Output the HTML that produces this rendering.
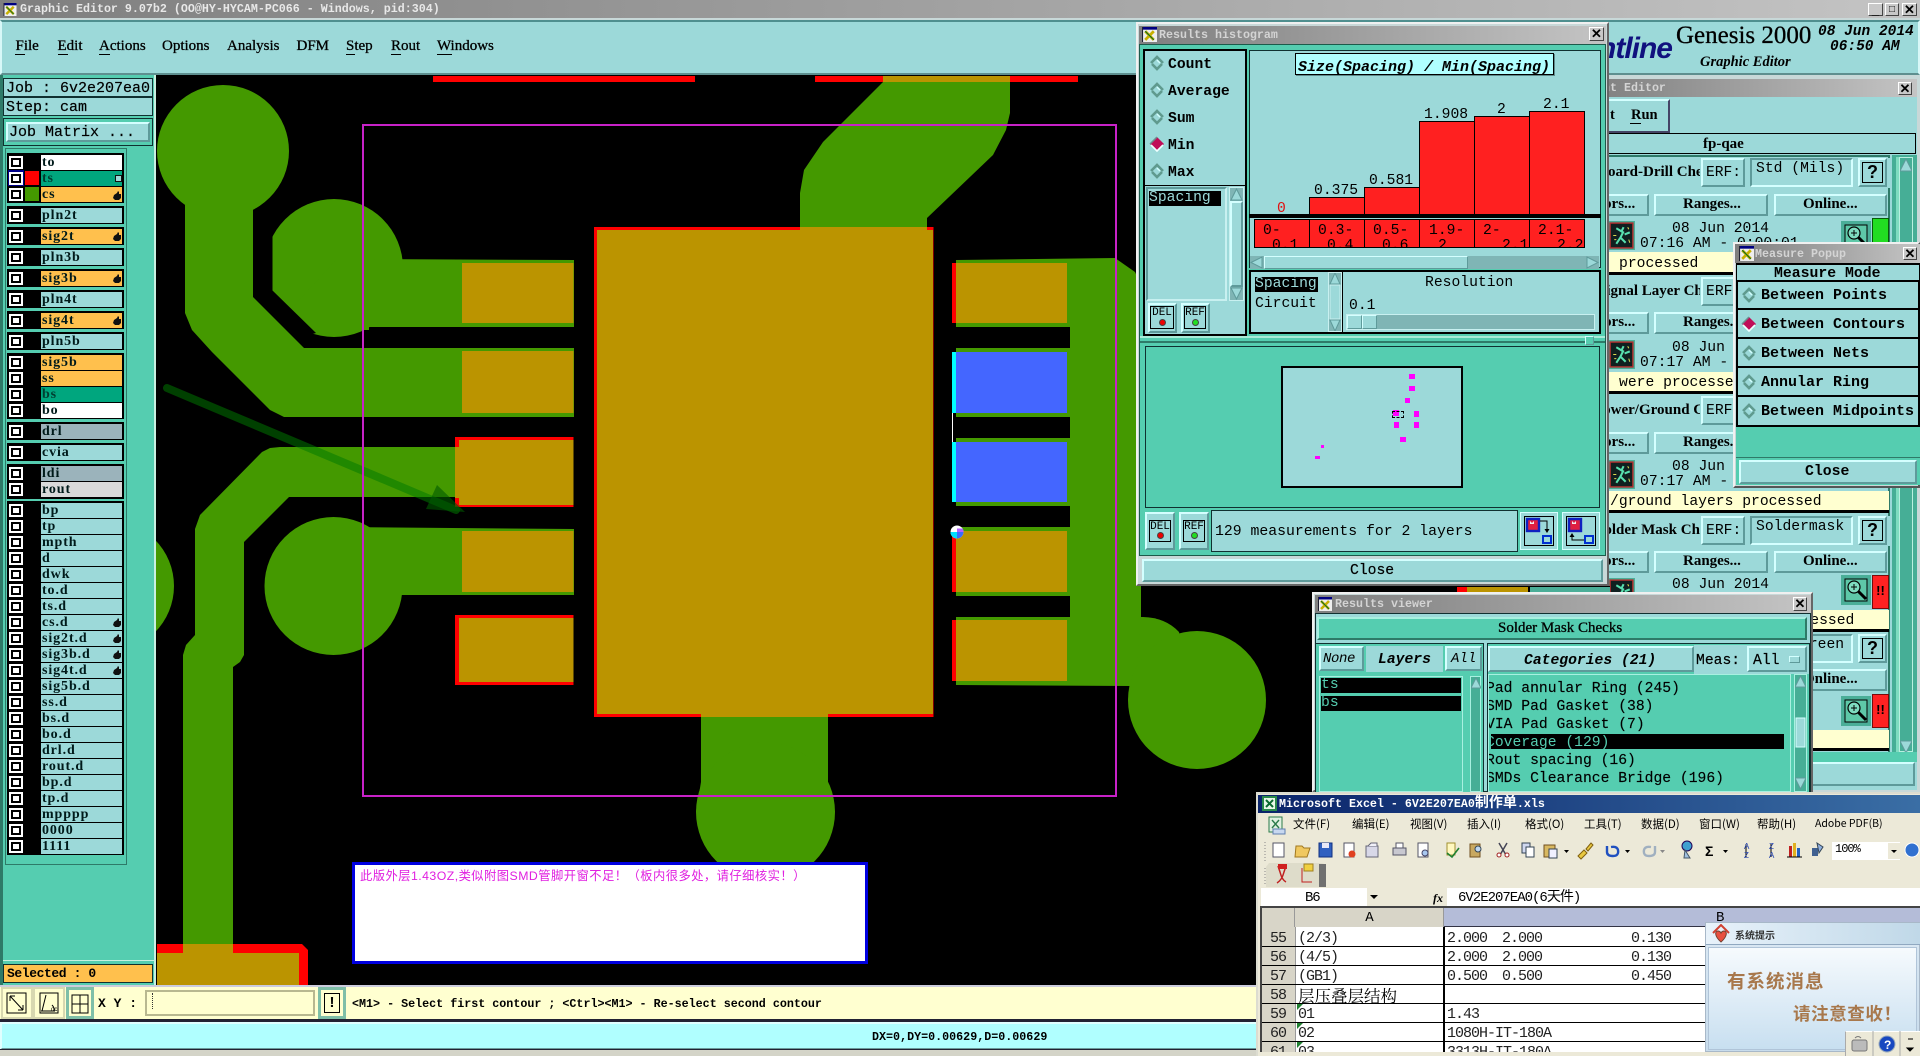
<!DOCTYPE html>
<html><head><meta charset="utf-8"><title>Graphic Editor</title>
<style>
*{box-sizing:border-box}
html,body{margin:0;padding:0;width:1920px;height:1056px;overflow:hidden;background:#000}
div,span,i,b,svg.a{position:absolute;display:block;font-style:normal;font-weight:normal}
em{font-style:normal}
.t,.t *{white-space:pre;line-height:16px;height:16px}
.m{font-family:"Liberation Mono","Noto Sans CJK SC",monospace;font-size:14.7px;color:#000}
.mb{font-family:"Liberation Mono","Noto Sans CJK SC",monospace;font-size:14.7px;font-weight:bold;color:#000}
.m.t,.mb.t{margin-top:1.5px}
.sb{font-family:"Liberation Serif","Noto Serif CJK SC",serif;font-size:15px;font-weight:bold;color:#000}
.bt{background:#9cd9d9;border:2px solid;border-color:#d4ffff #5e9a9a #5e9a9a #d4ffff}
.tl{background:linear-gradient(90deg,#7f7f7f,#c4c4c4);}
.tt{font-family:"Liberation Mono",monospace;font-size:11.67px;font-weight:bold;color:#d4d4d4;white-space:pre;line-height:16px}
.x{background:#c8c8c8;border:1px solid;border-color:#fff #444 #444 #fff;font:bold 13px/12px "Liberation Sans",sans-serif;color:#000;text-align:center}
.bx{background:#000;left:7px;width:117px}
.n{left:41px;width:81px;height:15px;background:#9cd9d9;font:bold 14px/15px "Liberation Serif",serif;letter-spacing:.9px;color:#001a1a;padding-left:1px;white-space:pre}
.c{left:13px;width:6px;height:5px;background:#fff;box-shadow:0 0 0 2px #000,0 0 0 4px #fff}
.y{background:#ffc04d}.g{background:#00a67e;color:#003d30}.w{background:#fff}.h{background:#9bb3bb}
.ms{background:#ff00ff}
</style></head><body>
<svg width="0" height="0" style="position:absolute">
<symbol id="xi" viewBox="0 0 14 14"><rect width="14" height="14" fill="#eee"/><rect width="14" height="2.5" fill="#000080"/><rect x="0" width="1" height="14" fill="#223"/><path d="M3 4l8 8M11 4l-8 8" stroke="#c8b000" stroke-width="2.6"/><path d="M3 4l8 8" stroke="#0a6a20" stroke-width="1"/></symbol>
<symbol id="d" viewBox="0 0 16 16"><polygon points="8,1 15,8 8,15 1,8" fill="#9cd9d9"/><polyline points="2,8 8,2 14,8" fill="none" stroke="#5f9a8e" stroke-width="2.6"/><polyline points="3,9 8,14 13,9" fill="none" stroke="#5f9a8e" stroke-width="2.6"/><polyline points="8,5 11,8" stroke="#d4ffff" stroke-width="1.4"/></symbol>
<symbol id="ds" viewBox="0 0 16 16"><polygon points="8,1 15,8 8,15 1,8" fill="#c00d58"/><polyline points="1,8 8,1" fill="none" stroke="#6a8f8f" stroke-width="1.5"/><polyline points="2,9 8,15 14,9" fill="none" stroke="#f0ffff" stroke-width="1.6"/></symbol>
<symbol id="hd" viewBox="0 0 8 9"><path d="M1 4L4 2L5 0L6 1L6 3L8 3L8 7L6 9L2 9L0 7Z" fill="#111"/></symbol>
<symbol id="run" viewBox="0 0 26 28"><rect width="26" height="28" fill="#4aae98"/><rect x="2" y="2" width="22" height="24" fill="#102020" stroke="#b03030" stroke-width="1.4"/><path d="M8 7l5 3 2-4M15 10l-3 6 5 5M12 16l-4 6M16 13l5-2" stroke="#58e0b0" stroke-width="2" fill="none"/><path d="M5 14h3M6 18h2M19 6l1 2M20 18l1 3" stroke="#d8d850" stroke-width="1"/></symbol>
<symbol id="zm" viewBox="0 0 30 30"><rect width="30" height="30" fill="#4aae98"/><rect x="4" y="4" width="22" height="22" fill="#5ec8a8" stroke="#000"/><circle cx="13" cy="12" r="6" fill="#7fdcc0" stroke="#000" stroke-width="1.2"/><path d="M10 12h6M13 9v6" stroke="#000"/><path d="M17 16l8 8" stroke="#000" stroke-width="3"/></symbol>
<symbol id="ib" viewBox="0 0 38 38"><rect x=".5" y=".5" width="37" height="37" fill="#9cd9d9" stroke="#d4ffff"/><rect x="4.500" y="4.500" width="29" height="29" fill="#9cd9d9" stroke="#000"/><rect x="7" y="7" width="12" height="12" fill="#e02040" stroke="#1020c0" stroke-width="2.4"/><path d="M10 9l2 2 2-2v3h-4z" fill="#f0f0f0"/><rect x="23" y="24" width="8" height="7" fill="#9cd9d9" stroke="#0030d0" stroke-width="2"/><path d="M20 9h7v11" fill="none" stroke="#000"/><path d="M24.500 17h5l-2.500 4z" fill="#000"/></symbol>
<symbol id="ib2" viewBox="0 0 38 38"><rect x=".5" y=".5" width="37" height="37" fill="#9cd9d9" stroke="#d4ffff"/><rect x="4.500" y="4.500" width="29" height="29" fill="#9cd9d9" stroke="#000"/><rect x="7" y="7" width="12" height="12" fill="#e02040" stroke="#1020c0" stroke-width="2.4"/><path d="M10 9l2 2 2-2v3h-4z" fill="#f0f0f0"/><rect x="23" y="24" width="8" height="7" fill="#9cd9d9" stroke="#0030d0" stroke-width="2"/><path d="M10 22v6h12" fill="none" stroke="#000"/><path d="M7.500 25h5l-2.500-4z" fill="#000"/></symbol>
</svg>

<!-- main window -->
<div style="left:0;top:0;width:1920px;height:1056px;background:#000"></div>
<div class="tl" style="left:0;top:0;width:1920px;height:18px"></div>
<svg class="a" style="left:3px;top:3px" width="14" height="13"><use href="#xi"/></svg>
<div class="tt" style="left:20px;top:1px;color:#e8e8e8">Graphic Editor 9.07b2 (OO@HY-HYCAM-PC066 - Windows, pid:304)</div>
<div style="left:0;top:18px;width:1920px;height:3px;background:#c8d8d8"></div>
<div class="x" style="left:1868px;top:3px;width:15px;height:13px">_</div>
<div class="x" style="left:1885px;top:3px;width:14px;height:13px;font-size:10px">&#9633;</div>
<div class="x" style="left:1902px;top:3px;width:15px;height:13px">&#10005;</div>

<div style="left:0;top:20px;width:1920px;height:55px;background:#9cd9d9;border:2px solid;border-color:#4f8f8f #d8f8f8 #5e8f8f #d8f8f8"></div>
<div class="t" style="left:0;top:38px;width:900px;font:15px/16px 'Liberation Serif',serif;color:#000;-webkit-text-stroke:.3px #000"><span style="left:15.5px;top:0">File</span><span style="left:57.5px;top:0">Edit</span><span style="left:99px;top:0">Actions</span><span style="left:162px;top:0">Options</span><span style="left:227px;top:0">Analysis</span><span style="left:296.5px;top:0">DFM</span><span style="left:346px;top:0">Step</span><span style="left:391px;top:0">Rout</span><span style="left:437px;top:0">Windows</span></div>
<div style="left:15px;top:54px;width:10px;height:1px;background:#000"></div>
<div style="left:58px;top:54px;width:10px;height:1px;background:#000"></div>
<div style="left:99px;top:54px;width:11px;height:1px;background:#000"></div>
<div style="left:346px;top:54px;width:9px;height:1px;background:#000"></div>
<div style="left:391px;top:54px;width:10px;height:1px;background:#000"></div>
<div style="left:437px;top:54px;width:15px;height:1px;background:#000"></div>

<!-- canvas -->
<svg class="a" style="left:0;top:0" width="1920" height="1056" viewBox="0 0 1920 1056">
<rect x="157" y="75" width="1763" height="912" fill="#000"/>
<g fill="#449900">
<circle cx="334" cy="268" r="69"/>
<polygon points="337,259 574,260 574,327 369,327 369,330 313,330 290,310"/>
</g>
<rect x="254" y="200" width="18.500" height="120" fill="#000"/>
<polygon points="272,290 316,333 290,340 250,300 250,290" fill="#000"/>
<g fill="#449900">
<circle cx="223" cy="151" r="66"/>
<polygon points="185,200 253,200 253,297 304,348 574,348 574,417 284,417 270,410 212,352 192,330 185,313"/>
<polygon points="280,447 455,447 455,497 289,497 244,542 244,655 240,662 233,667 233,944 183,944 183,655 186,645 195,635 195,529 200,515 262,452 270,448"/>
<circle cx="108" cy="586" r="66"/>
<circle cx="333.5" cy="586" r="69"/>
<polygon points="337,527 574,529 574,595 337,595"/>
<polygon points="883,82 1010,82 1010,113 1006,130 993,155 927,218 927,232 800,232 800,193 804,170 823,142"/>
<polygon points="701,715 828,715 828,782 835,812 696,812 701,782"/>
<circle cx="765.5" cy="812" r="69.5"/>
<polygon points="956,260 1115,258 1135,272 1141,285 1141,665 1130,686 956,685"/>
<path d="M1141 617Q1165 617 1179 632L1190 686L1135 686Z"/>
<circle cx="1197" cy="700" r="69"/>
</g>
<g fill="#000">
<rect x="940" y="327" width="130" height="21"/><rect x="940" y="417" width="130" height="21"/><rect x="940" y="506" width="130" height="21"/><rect x="940" y="596" width="130" height="21"/>
</g>
<rect x="433" y="76" width="262" height="6" fill="#f00"/><rect x="815" y="76" width="263" height="6" fill="#f00"/>
<rect x="883" y="76" width="127" height="6" fill="#bb9400"/>
<rect x="594" y="227" width="339.500" height="490" fill="#f00"/>
<rect x="597" y="230" width="336" height="484" fill="#bb9400"/>
<rect x="800" y="227" width="127" height="3" fill="#bb9400"/>
<rect x="701" y="714" width="127" height="3" fill="#bb9400"/>
<g fill="#bb9400">
<rect x="462" y="263" width="111.500" height="60"/>
<rect x="462" y="351" width="111.500" height="62"/>
<rect x="462" y="531" width="111.500" height="61"/>
</g>
<rect x="455" y="437" width="118.500" height="70" fill="#f00"/>
<rect x="459" y="440" width="114.500" height="65" fill="#bb9400"/>
<rect x="455" y="447" width="5" height="51" fill="#bb9400"/>
<rect x="455" y="615" width="118.500" height="70" fill="#f00"/>
<rect x="459" y="618" width="114.500" height="64" fill="#bb9400"/>
<g fill="#bb9400"><rect x="956" y="263" width="111" height="60"/><rect x="956" y="531" width="111" height="61"/><rect x="956" y="620" width="111" height="61"/></g>
<g fill="#4466ff"><rect x="956" y="352" width="111" height="61"/><rect x="956" y="442" width="111" height="60"/></g>
<g fill="#f00"><rect x="952" y="263" width="4" height="60"/><rect x="952" y="531" width="4" height="61"/><rect x="952" y="620" width="4" height="61"/></g>
<g fill="#0ff"><rect x="952" y="352" width="4" height="61"/><rect x="952" y="442" width="4" height="60"/></g>
<rect x="952" y="413" width="1" height="29" fill="#fff"/>
<polygon points="157,944 302,944 308,950 308,985 157,985" fill="#f00"/>
<rect x="157" y="953" width="142" height="32" fill="#bb9400"/><rect x="183" y="944" width="50" height="9" fill="#bb9400"/>
<g><line x1="167" y1="388" x2="456" y2="510" stroke="rgb(0,120,0)" stroke-opacity=".53" stroke-width="8" stroke-linecap="round"/>
<polygon points="426,509 437,485 465,512" fill="rgb(0,90,0)" fill-opacity=".6"/></g>
<rect x="363" y="125" width="753" height="671" fill="none" stroke="#c822c8" stroke-width="2"/>
<circle cx="957" cy="532" r="6.500" fill="#fff"/>
<path d="M957 532v6.500a6.500 6.500 0 0 1-6.500-6.500z" fill="#0df"/><path d="M957 532h6.500a6.500 6.500 0 0 1-6.500 6.500z" fill="#3a6cff"/><path d="M957 532v-3.500h5.800a6.500 6.500 0 0 1 .7 3.500z" fill="#b060ff"/>
</svg>

<!-- note -->
<div style="left:352px;top:862px;width:516px;height:102px;background:#fff;border:3px solid #0000e0"></div>
<div class="t" style="left:360px;top:868px;font:12.3px/16px 'Liberation Sans','Noto Sans CJK SC',sans-serif;color:#e020e0;letter-spacing:.45px">此版外层1.43OZ,类似附图SMD管脚开窗不足！（板内很多处，请仔细核实！）</div>

<!-- left panel -->
<div style="left:0;top:75px;width:156px;height:912px;background:#55cdb0;border-right:2px solid #c8f0e0;border-left:3px solid #2e7a68"></div>
<div style="left:3px;top:78px;width:150px;height:19px;background:#9cd9d9;border:1px solid #103030"></div>
<div style="left:3px;top:97px;width:150px;height:19px;background:#9cd9d9;border:1px solid #103030"></div>
<div class="m t" style="left:6px;top:79px;font-size:15px;-webkit-text-stroke:.2px #000">Job : 6v2e207ea0</div>
<div class="m t" style="left:6px;top:98px;font-size:15px;-webkit-text-stroke:.2px #000">Step: cam</div>
<div style="left:3px;top:118px;width:150px;height:28px;background:#55cdb0;border:1px solid #103030"></div>
<div class="bt" style="left:6px;top:122px;width:144px;height:20px"></div>
<div class="m t" style="left:9px;top:123px;font-size:15px;-webkit-text-stroke:.2px #000">Job Matrix ...</div>
<div style="left:5px;top:148px;width:122px;height:717px;background:#3f9b86;border:1px solid #2e7a68;border-right:2px solid #2e7a68"></div>
<div style="left:6px;top:149px;width:120px;height:715px;background:#55cdb0"></div>
<div class="bx" style="top:153px;height:50px"></div>
<div class="bx" style="top:206px;height:18px"></div><div class="bx" style="top:227px;height:18px"></div><div class="bx" style="top:248px;height:18px"></div><div class="bx" style="top:269px;height:18px"></div><div class="bx" style="top:290px;height:18px"></div><div class="bx" style="top:311px;height:18px"></div><div class="bx" style="top:332px;height:18px"></div>
<div class="bx" style="top:353px;height:66px"></div>
<div class="bx" style="top:422px;height:18px"></div><div class="bx" style="top:443px;height:18px"></div>
<div class="bx" style="top:464px;height:35px"></div>
<div class="bx" style="top:501px;height:354px"></div>

<div style="left:8px;top:170px;width:16px;height:16px;background:#00008b"></div>
<div style="left:25px;top:171px;width:14px;height:14px;background:#f00"></div>
<div style="left:25px;top:187px;width:14px;height:14px;background:#449900"></div>

<div class="c" style="top:160px"></div><div class="c" style="top:176px"></div><div class="c" style="top:192px"></div>
<div class="c" style="top:213px"></div><div class="c" style="top:234px"></div><div class="c" style="top:255px"></div><div class="c" style="top:276px"></div><div class="c" style="top:297px"></div><div class="c" style="top:318px"></div><div class="c" style="top:339px"></div>
<div class="c" style="top:360px"></div><div class="c" style="top:376px"></div><div class="c" style="top:392px"></div><div class="c" style="top:408px"></div>
<div class="c" style="top:429px"></div><div class="c" style="top:450px"></div><div class="c" style="top:471px"></div><div class="c" style="top:487px"></div>
<div class="c" style="top:508px"></div><div class="c" style="top:524px"></div><div class="c" style="top:540px"></div><div class="c" style="top:556px"></div><div class="c" style="top:572px"></div><div class="c" style="top:588px"></div><div class="c" style="top:604px"></div><div class="c" style="top:620px"></div><div class="c" style="top:636px"></div><div class="c" style="top:652px"></div><div class="c" style="top:668px"></div><div class="c" style="top:684px"></div><div class="c" style="top:700px"></div><div class="c" style="top:716px"></div><div class="c" style="top:732px"></div><div class="c" style="top:748px"></div><div class="c" style="top:764px"></div><div class="c" style="top:780px"></div><div class="c" style="top:796px"></div><div class="c" style="top:812px"></div><div class="c" style="top:828px"></div><div class="c" style="top:844px"></div>

<div class="n w" style="top:155px">to</div><div class="n g" style="top:171px">ts</div><div class="n y" style="top:187px">cs</div>
<div class="n" style="top:208px">pln2t</div><div class="n y" style="top:229px">sig2t</div><div class="n" style="top:250px">pln3b</div><div class="n y" style="top:271px">sig3b</div><div class="n" style="top:292px">pln4t</div><div class="n y" style="top:313px">sig4t</div><div class="n" style="top:334px">pln5b</div>
<div class="n y" style="top:355px">sig5b</div><div class="n y" style="top:371px">ss</div><div class="n g" style="top:387px">bs</div><div class="n w" style="top:403px">bo</div>
<div class="n h" style="top:424px">drl</div><div class="n" style="top:445px">cvia</div><div class="n h" style="top:466px">ldi</div><div class="n" style="top:482px;background:#d9d9d9">rout</div>
<div class="n" style="top:503px">bp</div><div class="n" style="top:519px">tp</div><div class="n" style="top:535px">mpth</div><div class="n" style="top:551px">d</div><div class="n" style="top:567px">dwk</div><div class="n" style="top:583px">to.d</div><div class="n" style="top:599px">ts.d</div><div class="n" style="top:615px">cs.d</div><div class="n" style="top:631px">sig2t.d</div><div class="n" style="top:647px">sig3b.d</div><div class="n" style="top:663px">sig4t.d</div><div class="n" style="top:679px">sig5b.d</div><div class="n" style="top:695px">ss.d</div><div class="n" style="top:711px">bs.d</div><div class="n" style="top:727px">bo.d</div><div class="n" style="top:743px">drl.d</div><div class="n" style="top:759px">rout.d</div><div class="n" style="top:775px">bp.d</div><div class="n" style="top:791px">tp.d</div><div class="n" style="top:807px">mpppp</div><div class="n" style="top:823px">0000</div><div class="n" style="top:839px">1111</div>

<div style="left:115px;top:175px;width:7px;height:7px;border:1px solid #111;background:#9cd9d9"></div>
<svg class="a" style="left:113px;top:191px" width="8" height="9"><use href="#hd"/></svg>
<svg class="a" style="left:113px;top:232px" width="8" height="9"><use href="#hd"/></svg>
<svg class="a" style="left:113px;top:274px" width="8" height="9"><use href="#hd"/></svg>
<svg class="a" style="left:113px;top:316px" width="8" height="9"><use href="#hd"/></svg>
<svg class="a" style="left:113px;top:618px" width="8" height="9"><use href="#hd"/></svg>
<svg class="a" style="left:113px;top:634px" width="8" height="9"><use href="#hd"/></svg>
<svg class="a" style="left:113px;top:650px" width="8" height="9"><use href="#hd"/></svg>
<svg class="a" style="left:113px;top:666px" width="8" height="9"><use href="#hd"/></svg>

<div style="left:3px;top:960px;width:152px;height:1px;background:#c8f0e0"></div>
<div style="left:3px;top:964px;width:150px;height:19px;background:#ffc04d;border:1px solid #103030"></div>
<div class="mb t" style="left:7px;top:964px;font-size:13px;letter-spacing:-.4px">Selected : 0</div>

<!-- bottom toolbar -->
<div style="left:0;top:985px;width:1920px;height:2px;background:#ccd"></div>
<div style="left:0;top:987px;width:1920px;height:33px;background:#ffffd0"></div>
<div style="left:1px;top:987px;width:32px;height:32px;background:#ffffd0;border:2px solid #d8d8b0"></div>
<div style="left:33px;top:987px;width:32px;height:32px;background:#ffffd0;border:2px solid #d8d8b0"></div>
<div style="left:66px;top:987px;width:28px;height:32px;background:#ffffd0;border:3px solid #7fbfa8"></div>
<svg class="a" style="left:0;top:985px" width="100" height="36" fill="none" stroke="#000" stroke-width="1">
<rect x="7" y="8" width="19" height="20"/><path d="M10 11l13 14M10 11v5M10 11h5M23 25v-5M23 25h-5"/>
<rect x="40" y="8" width="18" height="20"/><path d="M46 10l-4 16M41 26h14M52 20q3 3 2 6" /><text x="51" y="26" font-size="6" font-family="Liberation Sans" fill="#000" stroke="none">oc</text>
<rect x="72" y="10" width="16" height="18"/><path d="M80 10v18M72 19h16"/>
</svg>
<div class="mb t" style="left:98px;top:994px;font-size:13px">X Y :</div>
<div style="left:145px;top:990px;width:170px;height:26px;background:#ffffd0;border:2px solid #b8b890"></div>
<div style="left:152px;top:993px;width:1px;height:16px;border-left:1px dotted #333"></div>
<div style="left:318px;top:987px;width:28px;height:32px;background:#ffffd0;border:3px solid #7fbfa8"></div>
<div style="left:324px;top:993px;width:16px;height:20px;border:1px solid #000;font:bold 15px/18px 'Liberation Sans',sans-serif;text-align:center">!</div>
<div class="mb t" style="left:352px;top:994px;font-size:11.7px">&lt;M1&gt; - Select first contour ; &lt;Ctrl&gt;&lt;M1&gt; - Re-select second contour</div>
<div style="left:0;top:1019px;width:1920px;height:3px;background:#223"></div>
<div style="left:0;top:1022px;width:1920px;height:28px;background:#b0ffff;border:2px solid;border-color:#e0ffff #e0ffff #6a9a9a #e0ffff"></div>
<div style="left:0;top:1049px;width:1920px;height:1px;background:#223"></div>
<div style="left:0;top:1050px;width:1920px;height:6px;background:#d4d4c8"></div>
<div class="mb t" style="left:872px;top:1027px;font-size:11.7px">DX=0,DY=0.00629,D=0.00629</div>

<!-- genesis header -->
<div class="t" style="left:1500px;width:172px;top:34px;height:30px;text-align:right;font:italic bold 30px/30px 'Liberation Sans',sans-serif;color:#10107e;letter-spacing:-1px;line-height:30px">Frontline</div>
<div class="t" style="left:1676px;top:22px;height:28px;font:25px/28px 'Liberation Serif',serif;color:#000;-webkit-text-stroke:.3px #000;line-height:28px">Genesis 2000</div>
<div class="t" style="left:1700px;top:54px;font:italic bold 14.5px/16px 'Liberation Serif',serif;color:#000">Graphic Editor</div>
<div class="t" style="left:1818px;top:24px;font:italic bold 14.5px/16px 'Liberation Mono',monospace;color:#000">08 Jun 2014</div>
<div class="t" style="left:1830px;top:39px;font:italic bold 14.5px/16px 'Liberation Mono',monospace;color:#000">06:50 AM</div>

<!-- checklist editor -->
<div style="left:1590px;top:75px;width:330px;height:717px;background:#c8d8d8"></div>
<div class="tl" style="left:1590px;top:79px;width:327px;height:18px"></div>
<div class="tt" style="left:1568px;top:80px">Content Editor</div>
<div class="x" style="left:1898px;top:82px;width:14px;height:13px">&#10005;</div>
<div style="left:1590px;top:97px;width:327px;height:693px;background:#9cd9d9"></div>
<div class="bt" style="left:1590px;top:99px;width:80px;height:34px;border-bottom-color:#446;border-right-color:#446"></div>
<div class="sb t" style="left:1610px;top:107px;font-size:14.5px">t</div>
<div class="sb t" style="left:1631px;top:107px;font-size:14.5px">Run</div>
<div style="left:1630px;top:123px;width:11px;height:1px;background:#000"></div>
<div style="left:1590px;top:133px;width:326px;height:21px;border:1px solid #000;background:#9cd9d9"></div>
<div class="sb t" style="left:1703px;top:136px;font-size:15px">fp-qae</div>
<div style="left:1590px;top:155px;width:300px;height:600px;background:#9cd9d9;border-right:2px solid #2e7a68;border-top:2px solid #2e7a68"></div>
<div style="left:1892px;top:155px;width:25px;height:607px;background:#46ae96"></div>
<div style="left:1896px;top:157px;width:3px;height:595px;background:#7fdcc0"></div>
<div style="left:1899px;top:157px;width:14px;height:595px;background:#46ae96;border:1px solid #b8f0e0"></div>
<svg class="a" style="left:1900px;top:158px" width="12" height="14"><polygon points="6,1 12,13 0,13" fill="#9cd9d9" stroke="#5e9a9a"/></svg>
<svg class="a" style="left:1900px;top:740px" width="12" height="14"><polygon points="6,13 12,1 0,1" fill="#9cd9d9" stroke="#5e9a9a"/></svg>
<div style="left:1590px;top:752px;width:327px;height:10px;background:#55cdb0"></div>
<div class="bt" style="left:1590px;top:762px;width:325px;height:24px"></div>

<!-- item 1 -->
<div class="sb t" style="left:1598px;top:164px">Board-Drill Checks</div>
<div style="left:1700px;top:158px;width:190px;height:30px;background:#9cd9d9"></div>
<div class="bt m" style="left:1701px;top:158px;width:44px;height:29px;line-height:26px;padding-left:3px;font-size:14.6px">ERF:</div>
<div class="bt" style="left:1750px;top:158px;width:103px;height:29px;border-color:#5e9a9a #d4ffff #d4ffff #5e9a9a"></div>
<div class="m t" style="left:1756px;top:159px">Std (Mils)</div>
<div class="bt" style="left:1858px;top:158px;width:29px;height:29px"></div>
<div style="left:1862px;top:162px;width:21px;height:21px;border:1px solid #000;font:bold 18px/19px 'Liberation Sans',sans-serif;text-align:center;color:#000">?</div>
<div class="bt" style="left:1590px;top:194px;width:59px;height:22px"></div><div class="sb t" style="left:1581px;top:196px">Errors...</div>
<div class="bt" style="left:1654px;top:194px;width:114px;height:22px"></div><div class="sb t" style="left:1683px;top:196px">Ranges...</div>
<div class="bt" style="left:1774px;top:194px;width:113px;height:22px"></div><div class="sb t" style="left:1803px;top:196px">Online...</div>
<svg class="a" style="left:1608px;top:221px" width="27" height="29"><use href="#run"/></svg>
<div class="m t" style="left:1672px;top:219px">08 Jun 2014</div>
<div class="m t" style="left:1640px;top:234px">07:16 AM - 0:00:01</div>
<svg class="a" style="left:1841px;top:221px" width="30" height="30"><use href="#zm"/></svg>
<div style="left:1872px;top:218px;width:17px;height:34px;background:#22dd22;border:1px solid #0a5a0a"></div>
<div style="left:1600px;top:252px;width:289px;height:20px;background:#ffffd0"></div>
<div class="m t" style="left:1619px;top:254px">processed</div>
<div style="left:1600px;top:272px;width:289px;height:3px;background:#000"></div>
<!-- item 2 -->
<div class="sb t" style="left:1598px;top:283px">Signal Layer Checks</div>
<div style="left:1700px;top:277px;width:34px;height:30px;background:#9cd9d9"></div>
<div class="bt m" style="left:1701px;top:277px;width:44px;height:29px;line-height:26px;padding-left:3px">ERF:</div>
<div class="bt" style="left:1590px;top:312px;width:59px;height:22px"></div><div class="sb t" style="left:1581px;top:314px">Errors...</div>
<div class="bt" style="left:1654px;top:312px;width:114px;height:22px"></div><div class="sb t" style="left:1683px;top:314px">Ranges...</div>
<svg class="a" style="left:1608px;top:340px" width="27" height="29"><use href="#run"/></svg>
<div class="m t" style="left:1672px;top:338px">08 Jun 2014</div>
<div class="m t" style="left:1640px;top:353px">07:17 AM - 0:00:01</div>
<div style="left:1600px;top:372px;width:289px;height:19px;background:#ffffd0"></div>
<div class="m t" style="left:1619px;top:373px">were processed</div>
<div style="left:1600px;top:391px;width:289px;height:3px;background:#000"></div>
<!-- item 3 -->
<div class="sb t" style="left:1594px;top:402px">Power/Ground Checks</div>
<div style="left:1700px;top:396px;width:34px;height:30px;background:#9cd9d9"></div>
<div class="bt m" style="left:1701px;top:396px;width:44px;height:29px;line-height:26px;padding-left:3px">ERF:</div>
<div class="bt" style="left:1590px;top:432px;width:59px;height:22px"></div><div class="sb t" style="left:1581px;top:434px">Errors...</div>
<div class="bt" style="left:1654px;top:432px;width:114px;height:22px"></div><div class="sb t" style="left:1683px;top:434px">Ranges...</div>
<svg class="a" style="left:1608px;top:460px" width="27" height="29"><use href="#run"/></svg>
<div class="m t" style="left:1672px;top:457px">08 Jun 2014</div>
<div class="m t" style="left:1640px;top:472px">07:17 AM - 0:00:01</div>
<div style="left:1600px;top:491px;width:289px;height:19px;background:#ffffd0"></div>
<div class="m t" style="left:1610px;top:492px">/ground layers processed</div>
<div style="left:1600px;top:510px;width:289px;height:3px;background:#000"></div>
<!-- item 4 -->
<div class="sb t" style="left:1596px;top:522px">Solder Mask Checks</div>
<div style="left:1700px;top:516px;width:190px;height:30px;background:#9cd9d9"></div>
<div class="bt m" style="left:1701px;top:516px;width:44px;height:29px;line-height:26px;padding-left:3px">ERF:</div>
<div class="bt" style="left:1750px;top:516px;width:103px;height:29px;border-color:#5e9a9a #d4ffff #d4ffff #5e9a9a"></div>
<div class="m t" style="left:1756px;top:517px">Soldermask</div>
<div class="bt" style="left:1858px;top:516px;width:29px;height:29px"></div>
<div style="left:1862px;top:520px;width:21px;height:21px;border:1px solid #000;font:bold 18px/19px 'Liberation Sans',sans-serif;text-align:center;color:#000">?</div>
<div class="bt" style="left:1590px;top:551px;width:59px;height:22px"></div><div class="sb t" style="left:1581px;top:553px">Errors...</div>
<div class="bt" style="left:1654px;top:551px;width:114px;height:22px"></div><div class="sb t" style="left:1683px;top:553px">Ranges...</div>
<div class="bt" style="left:1774px;top:551px;width:113px;height:22px"></div><div class="sb t" style="left:1803px;top:553px">Online...</div>
<svg class="a" style="left:1608px;top:578px" width="27" height="29"><use href="#run"/></svg>
<div class="m t" style="left:1672px;top:575px">08 Jun 2014</div>
<svg class="a" style="left:1841px;top:575px" width="30" height="30"><use href="#zm"/></svg>
<div style="left:1872px;top:575px;width:17px;height:34px;background:#f22;border:1px solid #7a0a0a;font:bold 13px/30px 'Liberation Sans',sans-serif;text-align:center;color:#000">!!</div>
<div style="left:1740px;top:610px;width:149px;height:19px;background:#ffffd0"></div>
<div class="m t" style="left:1775px;top:611px">processed</div>
<div style="left:1740px;top:629px;width:149px;height:3px;background:#000"></div>
<!-- item 5 -->
<div class="bt" style="left:1750px;top:634px;width:103px;height:29px;border-color:#5e9a9a #d4ffff #d4ffff #5e9a9a"></div>
<div class="m t" style="left:1800px;top:635px">Green</div>
<div class="bt" style="left:1858px;top:634px;width:29px;height:29px"></div>
<div style="left:1862px;top:638px;width:21px;height:21px;border:1px solid #000;font:bold 18px/19px 'Liberation Sans',sans-serif;text-align:center;color:#000">?</div>
<div class="bt" style="left:1774px;top:669px;width:113px;height:22px"></div><div class="sb t" style="left:1803px;top:671px">Online...</div>
<svg class="a" style="left:1841px;top:696px" width="30" height="30"><use href="#zm"/></svg>
<div style="left:1872px;top:694px;width:17px;height:34px;background:#f22;border:1px solid #7a0a0a;font:bold 13px/30px 'Liberation Sans',sans-serif;text-align:center;color:#000">!!</div>
<div style="left:1740px;top:730px;width:149px;height:18px;background:#ffffd0"></div>
<div style="left:1740px;top:748px;width:149px;height:3px;background:#000"></div>

<!-- measure popup -->
<div style="left:1733px;top:242px;width:187px;height:246px;background:#c8d8d8;border:2px solid;border-color:#f0f0f0 #555 #555 #f0f0f0"></div>
<div class="tl" style="left:1735px;top:244px;width:185px;height:19px"></div>
<svg class="a" style="left:1739px;top:246px" width="15" height="15"><use href="#xi"/></svg>
<div class="tt" style="left:1755px;top:246px">Measure Popup</div>
<div class="x" style="left:1903px;top:247px;width:14px;height:13px">&#10005;</div>
<div style="left:1736px;top:263px;width:184px;height:18px;background:#9cd9d9;border:1px solid #000;border-top-width:2px"></div>
<div class="mb t" style="left:1774px;top:264px;font-size:14.8px">Measure Mode</div>
<div style="left:1736px;top:281px;width:184px;height:146px;background:#000"></div>
<div style="left:1738px;top:282px;width:180px;height:26px;background:#9cd9d9"></div>
<div style="left:1738px;top:310px;width:180px;height:27px;background:#9cd9d9"></div>
<div style="left:1738px;top:339px;width:180px;height:27px;background:#9cd9d9"></div>
<div style="left:1738px;top:368px;width:180px;height:27px;background:#9cd9d9"></div>
<div style="left:1738px;top:397px;width:180px;height:28px;background:#9cd9d9"></div>
<svg class="a" style="left:1741px;top:287px" width="16" height="16"><use href="#d"/></svg>
<svg class="a" style="left:1741px;top:316px" width="16" height="16"><use href="#ds"/></svg>
<svg class="a" style="left:1741px;top:345px" width="16" height="16"><use href="#d"/></svg>
<svg class="a" style="left:1741px;top:374px" width="16" height="16"><use href="#d"/></svg>
<svg class="a" style="left:1741px;top:403px" width="16" height="16"><use href="#d"/></svg>
<div class="mb t" style="left:1761px;top:286px;font-size:15px">Between Points</div>
<div class="mb t" style="left:1761px;top:315px;font-size:15px">Between Contours</div>
<div class="mb t" style="left:1761px;top:344px;font-size:15px">Between Nets</div>
<div class="mb t" style="left:1761px;top:373px;font-size:15px">Annular Ring</div>
<div class="mb t" style="left:1761px;top:402px;font-size:15px">Between Midpoints</div>
<div style="left:1736px;top:427px;width:184px;height:58px;background:#55cdb0"></div>
<div style="left:1736px;top:457px;width:184px;height:1px;background:#2e7a68"></div>
<div class="bt" style="left:1739px;top:460px;width:178px;height:24px"></div>
<div class="mb t" style="left:1805px;top:462px;font-size:14.8px">Close</div>

<!-- histogram window -->
<div style="left:1136px;top:22px;width:473px;height:564px;background:#c8d8d8;border:2px solid;border-color:#f0f0f0 #666 #666 #f0f0f0"></div>
<div class="tl" style="left:1139px;top:26px;width:467px;height:18px"></div>
<svg class="a" style="left:1142px;top:27px" width="15" height="15"><use href="#xi"/></svg>
<div class="tt" style="left:1159px;top:27px">Results histogram</div>
<div class="x" style="left:1589px;top:27px;width:15px;height:14px">&#10005;</div>
<div style="left:1139px;top:44px;width:467px;height:512px;background:#55cdb0;border:1px solid #1c5a4a"></div>
<!-- left panel -->
<div style="left:1143px;top:49px;width:104px;height:287px;background:#9cd9d9;border:2px solid #000"></div>
<div style="left:1145px;top:185px;width:100px;height:1px;background:#000"></div>
<svg class="a" style="left:1149px;top:55px" width="16" height="16"><use href="#d"/></svg>
<svg class="a" style="left:1149px;top:82px" width="16" height="16"><use href="#d"/></svg>
<svg class="a" style="left:1149px;top:109px" width="16" height="16"><use href="#d"/></svg>
<svg class="a" style="left:1149px;top:136px" width="16" height="16"><use href="#ds"/></svg>
<svg class="a" style="left:1149px;top:163px" width="16" height="16"><use href="#d"/></svg>
<div class="mb t" style="left:1168px;top:55.500px">Count</div>
<div class="mb t" style="left:1168px;top:82.500px">Average</div>
<div class="mb t" style="left:1168px;top:109.500px">Sum</div>
<div class="mb t" style="left:1168px;top:136.500px">Min</div>
<div class="mb t" style="left:1168px;top:163.500px">Max</div>
<div style="left:1146px;top:187px;width:81px;height:114px;border:2px solid;border-color:#5e9a9a #c8f0f0 #c8f0f0 #5e9a9a"></div>
<div class="t" style="left:1149px;top:191px;width:72px;height:15px;background:#000;color:#9cd9d9;font:14.7px/15px 'Liberation Mono',monospace;line-height:15px">Spacing</div>
<div style="left:1229px;top:187px;width:15px;height:114px;background:#7fb5b5;border:1px solid #c8f0f0"></div>
<svg class="a" style="left:1230px;top:188px" width="13" height="13"><polygon points="6.500,1 12,12 1,12" fill="#9cd9d9" stroke="#5e9a9a"/></svg>
<div class="bt" style="left:1230px;top:201px;width:13px;height:86px"></div>
<svg class="a" style="left:1230px;top:287px" width="13" height="13"><polygon points="6.500,12 12,1 1,1" fill="#9cd9d9" stroke="#5e9a9a"/></svg>
<div class="bt" style="left:1148px;top:303px;width:29px;height:30px"></div>
<div style="left:1150px;top:306px;width:24px;height:23px;border:1px solid #000;font:11px/13px 'Liberation Mono',monospace;color:#000;text-align:center">DEL</div>
<div style="left:1159px;top:319px;width:7px;height:7px;border-radius:50%;background:#e00;border:1px solid #444"></div>
<div class="bt" style="left:1181px;top:303px;width:29px;height:30px"></div>
<div style="left:1184px;top:306px;width:22px;height:23px;border:1px solid #000;font:11px/13px 'Liberation Mono',monospace;color:#000;text-align:center">REF</div>
<div style="left:1192px;top:319px;width:7px;height:7px;border-radius:50%;background:#2d2;border:1px solid #444"></div>
<!-- chart -->
<div style="left:1249px;top:50px;width:352px;height:218px;background:#9cd9d9;border:1px solid #103030"></div>
<div style="left:1295px;top:53px;width:259px;height:22px;background:#b0ffff;border:1px solid #000;box-shadow:1px 1px 0 #5e8a8a"></div>
<div class="t" style="left:1298px;top:60px;font:italic bold 15px/16px 'Liberation Mono',monospace;color:#000">Size(Spacing) / Min(Spacing)</div>
<div style="left:1309px;top:197px;width:56px;height:18px;background:#ff2020;border:1px solid #000"></div>
<div style="left:1364px;top:187px;width:56px;height:28px;background:#ff2020;border:1px solid #000"></div>
<div style="left:1419px;top:121px;width:56px;height:94px;background:#ff2020;border:1px solid #000"></div>
<div style="left:1474px;top:116px;width:56px;height:99px;background:#ff2020;border:1px solid #000"></div>
<div style="left:1529px;top:111px;width:56px;height:104px;background:#ff2020;border:1px solid #000"></div>
<div style="left:1249px;top:214px;width:352px;height:4px;background:#000"></div>
<div class="m t" style="left:1277px;top:199px;color:#e01010">0</div>
<div class="m t" style="left:1314px;top:181px">0.375</div>
<div class="m t" style="left:1369px;top:171px">0.581</div>
<div class="m t" style="left:1424px;top:105px">1.908</div>
<div class="m t" style="left:1497px;top:100px">2</div>
<div class="m t" style="left:1543px;top:95px">2.1</div>
<!-- category cells -->
<div style="left:1254px;top:219px;width:331px;height:29px;background:#ff2020;border:1px solid #000;overflow:hidden">
<i style="left:54px;top:0;width:1px;height:29px;background:#000"></i><i style="left:109px;top:0;width:1px;height:29px;background:#000"></i><i style="left:164px;top:0;width:1px;height:29px;background:#000"></i><i style="left:219px;top:0;width:1px;height:29px;background:#000"></i><i style="left:274px;top:0;width:1px;height:29px;background:#000"></i>
<span class="m t" style="left:8px;top:1px">0-</span><span class="m t" style="left:17px;top:16px">0.1</span>
<span class="m t" style="left:63px;top:1px">0.3-</span><span class="m t" style="left:72px;top:16px">0.4</span>
<span class="m t" style="left:118px;top:1px">0.5-</span><span class="m t" style="left:127px;top:16px">0.6</span>
<span class="m t" style="left:174px;top:1px">1.9-</span><span class="m t" style="left:183px;top:16px">2</span>
<span class="m t" style="left:228px;top:1px">2-</span><span class="m t" style="left:247px;top:16px">2.1</span>
<span class="m t" style="left:283px;top:1px">2.1-</span><span class="m t" style="left:302px;top:16px">2.2</span>
</div>
<div style="left:1250px;top:256px;width:349px;height:13px;background:#7fb5b5"></div>
<div class="bt" style="left:1264px;top:256px;width:204px;height:13px;border-width:1px"></div>
<svg class="a" style="left:1250px;top:256px" width="349" height="13"><polygon points="1,6.500 12,1 12,12" fill="#9cd9d9" stroke="#5e9a9a"/><polygon points="348,6.500 337,1 337,12" fill="#9cd9d9" stroke="#5e9a9a"/></svg>
<div style="left:1249px;top:270px;width:352px;height:64px;background:#9cd9d9;border:2px solid #000"></div>
<div style="left:1342px;top:272px;width:1px;height:60px;background:#000"></div>
<div class="t" style="left:1255px;top:277px;width:63px;height:15px;background:#000;color:#9cd9d9;font:14.7px/15px 'Liberation Mono',monospace;line-height:15px;overflow:hidden">Spacing</div>
<div class="m t" style="left:1255px;top:294px">Circuit</div>
<div style="left:1328px;top:272px;width:14px;height:60px;background:#7fb5b5;border:1px solid #c8f0f0"></div>
<svg class="a" style="left:1329px;top:273px" width="12" height="58"><polygon points="6,0 11,11 1,11" fill="#9cd9d9" stroke="#5e9a9a"/><polygon points="6,58 11,47 1,47" fill="#9cd9d9" stroke="#5e9a9a"/><rect x="1" y="12" width="10" height="34" fill="#9cd9d9" stroke="#c8f0f0"/></svg>
<div class="m t" style="left:1425px;top:273px">Resolution</div>
<div class="m t" style="left:1349px;top:296px">0.1</div>
<div style="left:1346px;top:314px;width:249px;height:16px;background:#7fb5b5;border:1px solid #c8f0f0"></div>
<div class="bt" style="left:1347px;top:315px;width:15px;height:14px;border-width:1px"></div><div class="bt" style="left:1362px;top:315px;width:15px;height:14px;border-width:1px"></div>
<div style="left:1140px;top:336px;width:465px;height:2px;background:#a8ecd8"></div>
<div style="left:1140px;top:341px;width:465px;height:2px;background:#2e7a68"></div>
<div class="bt" style="left:1585px;top:336px;width:9px;height:9px;border-width:1px;background:#55cdb0"></div>
<!-- map -->
<div style="left:1145px;top:346px;width:455px;height:162px;background:#55cdb0;border:1px solid #103030"></div>
<div style="left:1281px;top:366px;width:182px;height:122px;background:#9cd9d9;border:2px solid #000"></div>
<div class="ms" style="left:1409px;top:374px;width:6px;height:5px"></div><div class="ms" style="left:1409px;top:386px;width:6px;height:5px"></div><div class="ms" style="left:1405px;top:398px;width:5px;height:5px"></div><div class="ms" style="left:1393px;top:410px;width:6px;height:6px"></div><div class="ms" style="left:1414px;top:411px;width:5px;height:6px"></div><div class="ms" style="left:1394px;top:422px;width:5px;height:6px"></div><div class="ms" style="left:1414px;top:422px;width:5px;height:6px"></div><div class="ms" style="left:1400px;top:437px;width:6px;height:5px"></div><div class="ms" style="left:1321px;top:445px;width:3px;height:3px"></div><div class="ms" style="left:1315px;top:456px;width:5px;height:3px"></div>
<div style="left:1392px;top:411px;width:12px;height:7px;border:1px dashed #000"></div>
<!-- bottom row -->
<div class="bt" style="left:1145px;top:512px;width:30px;height:38px"></div>
<div style="left:1149px;top:520px;width:22px;height:22px;border:1px solid #000;font:11px/13px 'Liberation Mono',monospace;text-align:center;color:#000">DEL</div>
<div style="left:1157px;top:532px;width:7px;height:7px;border-radius:50%;background:#e00;border:1px solid #444"></div>
<div class="bt" style="left:1179px;top:512px;width:30px;height:38px"></div>
<div style="left:1183px;top:520px;width:22px;height:22px;border:1px solid #000;font:11px/13px 'Liberation Mono',monospace;text-align:center;color:#000">REF</div>
<div style="left:1191px;top:532px;width:7px;height:7px;border-radius:50%;background:#2d2;border:1px solid #444"></div>
<div style="left:1211px;top:510px;width:307px;height:42px;background:#9cd9d9;border:1px solid #103030"></div>
<div class="m t" style="left:1215px;top:522px;font-size:14.8px">129 measurements for 2 layers</div>
<svg class="a" style="left:1520px;top:512px" width="38" height="38"><use href="#ib"/></svg>
<svg class="a" style="left:1562px;top:512px" width="38" height="38"><use href="#ib2"/></svg>
<div class="bt" style="left:1142px;top:559px;width:461px;height:23px"></div>
<div class="m t" style="left:1350px;top:561px;-webkit-text-stroke:.2px #000">Close</div>
<!-- strip beneath -->
<div style="left:1142px;top:586px;width:468px;height:6px;background:#000"></div>
<div style="left:1457px;top:587px;width:10px;height:5px;background:#f00"></div>
<div style="left:1467px;top:587px;width:61px;height:5px;background:#bb9400"></div>
<div style="left:1530px;top:587px;width:80px;height:5px;background:#4aae98"></div>

<!-- results viewer -->
<div style="left:1312px;top:592px;width:501px;height:200px;background:#c8d8d8;border:2px solid;border-color:#f0f0f0 #666 #666 #f0f0f0"></div>
<div class="tl" style="left:1315px;top:595px;width:496px;height:18px"></div>
<svg class="a" style="left:1318px;top:597px" width="14" height="14"><use href="#xi"/></svg>
<div class="tt" style="left:1335px;top:596px">Results viewer</div>
<div class="x" style="left:1793px;top:597px;width:14px;height:14px">&#10005;</div>
<div style="left:1315px;top:613px;width:496px;height:179px;background:#9cd9d9;border:1px solid #103030"></div>
<div style="left:1317px;top:617px;width:490px;height:23px;background:#55cdb0;border:2px solid;border-color:#a8f0e0 #2e7a68 #2e7a68 #a8f0e0"></div>
<div class="sb t" style="left:1498px;top:620px;font-size:15px;font-weight:normal;-webkit-text-stroke:.3px #000">Solder Mask Checks</div>
<div style="left:1316px;top:643px;width:168px;height:150px;background:#55cdb0;border-top:1px solid #103030;border-right:1px solid #103030"></div>
<div class="bt" style="left:1319px;top:646px;width:45px;height:25px"></div>
<div class="t" style="left:1323px;top:651px;font:italic 14px/16px 'Liberation Mono',monospace;color:#000;letter-spacing:-.4px">None</div>
<div style="left:1366px;top:646px;width:77px;height:26px;background:#9cd9d9"></div>
<div class="t" style="left:1378px;top:652px;font:italic bold 14.7px/16px 'Liberation Mono',monospace;color:#000">Layers</div>
<div class="bt" style="left:1445px;top:646px;width:37px;height:25px"></div>
<div class="t" style="left:1451px;top:651px;font:italic 14px/16px 'Liberation Mono',monospace;color:#000">All</div>
<div style="left:1319px;top:676px;width:144px;height:116px;background:#55cdb0;border:1px solid #a8f0e0"></div>
<div class="t" style="left:1321px;top:678px;width:140px;height:15px;background:#000;color:#55cdb0;font:14.7px/15px 'Liberation Mono',monospace;line-height:15px">ts</div>
<div class="t" style="left:1321px;top:696px;width:140px;height:15px;background:#000;color:#55cdb0;font:14.7px/15px 'Liberation Mono',monospace;line-height:15px">bs</div>
<div style="left:1470px;top:676px;width:11px;height:116px;background:#46ae96;border:1px solid #a8f0e0"></div>
<svg class="a" style="left:1471px;top:677px" width="10" height="12"><polygon points="5,1 10,11 0,11" fill="#9cd9d9" stroke="#5e9a9a"/></svg>
<div style="left:1487px;top:643px;width:323px;height:150px;background:#55cdb0;border:1px solid #103030"></div>
<div class="bt" style="left:1488px;top:646px;width:206px;height:26px"></div>
<div class="t" style="left:1524px;top:653px;font:italic bold 14.7px/16px 'Liberation Mono',monospace;color:#000">Categories (21)</div>
<div style="left:1694px;top:645px;width:115px;height:29px;background:#9cd9d9"></div>
<div class="mb t" style="left:1696px;top:651px;font-weight:normal;-webkit-text-stroke:.2px #000">Meas:</div>
<div class="bt" style="left:1747px;top:646px;width:60px;height:26px"></div>
<div class="m t" style="left:1753px;top:651px;-webkit-text-stroke:.2px #000">All</div>
<div class="bt" style="left:1789px;top:656px;width:11px;height:7px;border-width:1px"></div>
<div style="left:1488px;top:674px;width:303px;height:118px;background:#55cdb0;border:1px solid #a8f0e0;overflow:hidden">
<div style="left:2px;top:59px;width:293px;height:15px;background:#000"></div>
<div class="m t" style="left:-3px;top:4px;-webkit-text-stroke:.15px #000">Pad annular Ring (245)</div>
<div class="m t" style="left:-3px;top:22px;-webkit-text-stroke:.15px #000">SMD Pad Gasket (38)</div>
<div class="m t" style="left:-3px;top:40px;-webkit-text-stroke:.15px #000">VIA Pad Gasket (7)</div>
<div class="m t" style="left:-3px;top:58px;color:#55cdb0">Coverage (129)</div>
<div class="m t" style="left:-3px;top:76px;-webkit-text-stroke:.15px #000">Rout spacing (16)</div>
<div class="m t" style="left:-3px;top:94px;-webkit-text-stroke:.15px #000">SMDs Clearance Bridge (196)</div>
</div>
<div style="left:1794px;top:674px;width:13px;height:118px;background:#46ae96;border:1px solid #a8f0e0"></div>
<svg class="a" style="left:1795px;top:675px" width="11" height="115"><polygon points="5.500,1 11,12 0,12" fill="#9cd9d9" stroke="#5e9a9a"/><rect x="1" y="43" width="9" height="29" fill="#9cd9d9" stroke="#d4ffff"/><polygon points="5.500,114 11,103 0,103" fill="#9cd9d9" stroke="#5e9a9a"/></svg>

<!-- excel -->
<div style="left:1256px;top:792px;width:664px;height:264px;background:#ece9d8;border-left:2px solid #dcdcd0;border-top:2px solid #dcdcd0"></div>
<div style="left:1258px;top:795px;width:662px;height:18px;background:linear-gradient(90deg,#0a246a,#3a6ea5)"></div>
<svg class="a" style="left:1262px;top:796px" width="15" height="15"><rect width="15" height="15" fill="#2a8a4a"/><rect x="2" y="2" width="11" height="11" fill="#e8f8e8"/><path d="M4 4l7 7M11 4l-7 7" stroke="#0a6a30" stroke-width="2"/></svg>
<div class="t" style="left:1279px;top:796px;font:bold 11.67px/16px 'Liberation Mono','Noto Sans CJK SC',monospace;color:#fff">Microsoft Excel - 6V2E207EA0<em style="font-size:14px">制作单</em>.xls</div>
<svg class="a" style="left:1264px;top:814px" width="24" height="22"><rect x="5" y="3" width="13" height="15" fill="#e0f0e0" stroke="#2a7a4a"/><path d="M8 6l7 8M15 6l-7 8" stroke="#2a7a4a" stroke-width="1.4"/><rect x="9" y="15" width="12" height="5" fill="#c8d8f0" stroke="#6080b0"/></svg>
<div class="t" style="left:0;top:816px;font:11.5px/16px 'Noto Sans CJK SC','Liberation Sans',sans-serif;color:#000;width:1920px"><span style="left:1293px;top:0">文件(F)</span><span style="left:1352px;top:0">编辑(E)</span><span style="left:1410px;top:0">视图(V)</span><span style="left:1467px;top:0">插入(I)</span><span style="left:1525px;top:0">格式(O)</span><span style="left:1584px;top:0">工具(T)</span><span style="left:1641px;top:0">数据(D)</span><span style="left:1699px;top:0">窗口(W)</span><span style="left:1757px;top:0">帮助(H)</span><span style="left:1815px;top:0;font-size:10.5px">Adobe PDF(B)</span></div>
<svg class="a" style="left:1258px;top:838px" width="662" height="50">
<g fill="none" stroke="#888" stroke-dasharray="1 2"><path d="M7 4v20M7 30v18"/></g>
<g transform="translate(-1258,-838)">
<rect x="1273" y="843" width="11" height="14" fill="#fff" stroke="#556"/>
<path d="M1296 846h6l2 2h6l-3 9h-12z" fill="#f0c860" stroke="#a07820"/>
<rect x="1319" y="843" width="13" height="14" fill="#3060c0" stroke="#103080"/><rect x="1322" y="843" width="7" height="5" fill="#e8e8f8"/>
<rect x="1344" y="843" width="10" height="14" fill="#fff" stroke="#556"/><circle cx="1352" cy="854" r="3.500" fill="#e04020"/>
<rect x="1366" y="846" width="12" height="11" fill="#d8d8e8" stroke="#667"/><path d="M1368 846l3-3h6v3" fill="#f0f0f8" stroke="#667"/>
<rect x="1393" y="848" width="13" height="7" fill="#c8c8d0" stroke="#556"/><rect x="1396" y="843" width="7" height="5" fill="#fff" stroke="#556"/>
<rect x="1418" y="843" width="10" height="14" fill="#fff" stroke="#556"/><circle cx="1425" cy="853" r="3" fill="#a8c8f0" stroke="#446"/>
<rect x="1447" y="843" width="8" height="12" fill="#fff8c0" stroke="#a09030"/><path d="M1447 853l5 4 7-9" stroke="#208030" fill="none" stroke-width="1.600"/>
<rect x="1470" y="844" width="10" height="13" fill="#c8a860" stroke="#705020"/><circle cx="1478" cy="849" r="3" fill="#c0d8f0" stroke="#345"/>
<path d="M1499 843l7 12M1507 843l-7 12" stroke="#445" stroke-width="1.500"/><circle cx="1499" cy="855" r="2" fill="#fff" stroke="#a02020"/><circle cx="1507" cy="855" r="2" fill="#fff" stroke="#a02020"/>
<rect x="1522" y="843" width="8" height="10" fill="#d0d8f0" stroke="#345"/><rect x="1526" y="847" width="8" height="10" fill="#fff" stroke="#345"/>
<rect x="1544" y="845" width="11" height="12" fill="#d8b860" stroke="#705020"/><rect x="1549" y="849" width="8" height="9" fill="#f0f0ff" stroke="#345"/>
<path d="M1564 850h5l-2.500 3z" fill="#000"/>
<path d="M1578 856l6-6 3 3-6 6zM1586 849l5-6 2 2-5 6z" fill="#e8c840" stroke="#806010"/>
<path d="M1607 846v6q0 4 6 4t5-6q-1-4-7-3" fill="none" stroke="#2050c0" stroke-width="2.400"/>
<path d="M1625 850h5l-2.500 3z" fill="#000"/>
<path d="M1655 846v6q0 4-6 4t-5-6q1-4 7-3" fill="none" stroke="#a0b0c0" stroke-width="2.400"/>
<path d="M1660 850h5l-2.500 3z" fill="#888"/>
<circle cx="1687" cy="846" r="5" fill="#40a0d0" stroke="#205"/><path d="M1685 850l5 8h-6z" fill="#a0c0e0" stroke="#456"/>
<path d="M1723 850h5l-2.500 3z" fill="#000"/>
<path d="M1746 844v13M1771 844v13" stroke="#000"/>
<rect x="1789" y="846" width="3" height="11" fill="#c02020"/><rect x="1793" y="843" width="3" height="14" fill="#e0b020"/><rect x="1797" y="848" width="3" height="9" fill="#2060c0"/><path d="M1787 857h15" stroke="#000"/>
<rect x="1812" y="848" width="6" height="8" fill="#406090"/><path d="M1817 843l6 4-4 6z" fill="#90b0e0" stroke="#345"/>
<rect x="1832" y="842" width="68" height="18" fill="#fff"/><rect x="1888" y="843" width="12" height="16" fill="#ece9d8"/><path d="M1891 850h6l-3 3z" fill="#000"/>
<circle cx="1912" cy="850" r="7" fill="#3070d0" stroke="#fff"/>
<path d="M1269 863h50q7 0 7 4v20h-60v-20z" fill="#d8d5c4" opacity=".7"/>
<rect x="1319" y="864" width="7" height="23" fill="#707070"/>
<path d="M1278 866l2 6q2 8 6 10M1286 866l-2 6q-2 8-7 11" fill="none" stroke="#c02020" stroke-width="1.500"/><rect x="1278" y="864" width="9" height="5" fill="#d02020"/>
<path d="M1302 868v14h10" fill="none" stroke="#c02020"/><rect x="1304" y="864" width="9" height="7" fill="#f0d040" stroke="#a08020"/>
</g>
<g font-family="Liberation Sans" fill="#000"><text x="447" y="18" font-size="14" font-weight="bold">Σ</text><text x="486" y="11" font-size="8" fill="#2040b0">A</text><text x="486" y="20" font-size="8" fill="#2040b0">Z</text><text x="511" y="11" font-size="8" fill="#2040b0">Z</text><text x="511" y="20" font-size="8" fill="#2040b0">A</text></g>
</svg>
<div class="t" style="left:1835px;top:841px;font:12px/16px 'Liberation Mono',monospace;letter-spacing:-1px;color:#000">100%</div>
<div style="left:1261px;top:888px;width:106px;height:18px;background:#fff"></div>
<div class="t" style="left:1305px;top:890px;font:14px/16px 'Liberation Mono',monospace;letter-spacing:-1.200px;color:#000">B6</div>
<svg class="a" style="left:1370px;top:895px" width="10" height="6"><polygon points="0,0 8,0 4,4" fill="#000"/></svg>
<div class="t" style="left:1433px;top:890px;font:italic bold 12px/16px 'Liberation Serif',serif;color:#000">fx</div>
<div style="left:1447px;top:888px;width:473px;height:18px;background:#fff"></div>
<div class="t" style="left:1458px;top:890px;font:14px/16px 'Liberation Mono','Noto Sans CJK SC',monospace;letter-spacing:-1px;color:#000">6V2E207EA0(6天件)</div>
<div style="left:1260px;top:906px;width:660px;height:146px;background:#fff;border-top:2px solid #444;border-left:2px solid #444;overflow:hidden">
<div style="left:0;top:0;width:33px;height:19px;background:#d8d5c8;border-right:1px solid #999"></div>
<div style="left:33px;top:0;width:149px;height:19px;background:#d8d5c8;border-right:1px solid #999;text-align:center;font:14px/20px 'Liberation Mono',monospace;letter-spacing:-1px;color:#000">A</div>
<div style="left:182px;top:0;width:478px;height:19px;background:#b4bcd8;border-bottom:1px solid #334;font:14px/20px 'Liberation Mono',monospace;color:#000"><span style="left:272px;top:0">B</span></div>
<div style="left:0;top:19px;width:33px;height:130px;background:#d8d5c8"></div>
<div style="left:33px;top:19px;width:1px;height:130px;background:#999"></div>
<div style="left:181px;top:19px;width:2px;height:130px;background:#000"></div>
<div style="left:0;top:38px;width:660px;height:1px;background:#000"></div><div style="left:0;top:57px;width:660px;height:1px;background:#000"></div><div style="left:0;top:76px;width:660px;height:1px;background:#000"></div><div style="left:0;top:95px;width:660px;height:1px;background:#000"></div><div style="left:0;top:114px;width:660px;height:1px;background:#000"></div><div style="left:0;top:133px;width:660px;height:1px;background:#000"></div>
<div style="left:35px;top:96px;width:0;height:0;border-top:6px solid #208030;border-right:6px solid transparent"></div>
<div style="left:35px;top:115px;width:0;height:0;border-top:6px solid #208030;border-right:6px solid transparent"></div>
<div style="left:35px;top:134px;width:0;height:0;border-top:6px solid #208030;border-right:6px solid transparent"></div>
<div class="t" style="left:0;top:0;width:660px;font:15px/16px 'Liberation Mono','Noto Sans CJK SC',monospace;letter-spacing:-1px;color:#222"><span style="left:8px;top:23px">55</span><span style="left:36px;top:23px">(2/3)</span><span style="left:185px;top:23px">2.000</span><span style="left:240px;top:23px">2.000</span><span style="left:369px;top:23px">0.130</span><span style="left:8px;top:42px">56</span><span style="left:36px;top:42px">(4/5)</span><span style="left:185px;top:42px">2.000</span><span style="left:240px;top:42px">2.000</span><span style="left:369px;top:42px">0.130</span><span style="left:8px;top:61px">57</span><span style="left:36px;top:61px">(GB1)</span><span style="left:185px;top:61px">0.500</span><span style="left:240px;top:61px">0.500</span><span style="left:369px;top:61px">0.450</span><span style="left:8px;top:80px">58</span><span style="left:36px;top:79px;font-size:16.500px;letter-spacing:0;font-family:'Noto Serif CJK SC',serif;color:#000">层压叠层结构</span><span style="left:8px;top:99px">59</span><span style="left:36px;top:99px">01</span><span style="left:185px;top:99px">1.43</span><span style="left:8px;top:118px">60</span><span style="left:36px;top:118px">02</span><span style="left:185px;top:118px">1080H-IT-180A</span><span style="left:8px;top:137px">61</span><span style="left:36px;top:137px">03</span><span style="left:185px;top:137px">3313H-IT-180A</span></div>
</div>
<div style="left:1258px;top:1052px;width:662px;height:4px;background:#ece9d8"></div>

<!-- notification popup -->
<div style="left:1705px;top:922px;width:215px;height:130px;background:linear-gradient(180deg,#dbe9f4,#c8dcec);border:1px solid #a8b8c8"></div>
<div style="left:1706px;top:923px;width:214px;height:22px;background:linear-gradient(90deg,#e8f2fa,#c0d8e8);border-bottom:1px solid #90a8c0"></div>
<svg class="a" style="left:1711px;top:924px" width="20" height="20"><path d="M2 9L10 1l8 8" fill="none" stroke="#d04030" stroke-width="2"/><path d="M10 18C3 12 4 7 7 7q2 0 3 2q1-2 3-2c3 0 4 5-3 11z" fill="#e85040" stroke="#704030"/></svg>
<div class="t" style="left:1735px;top:927px;font:bold 10px/16px 'Noto Sans CJK SC',sans-serif;color:#333">系统提示</div>
<div style="left:1708px;top:947px;width:209px;height:103px;background:linear-gradient(180deg,#f6fafd,#c8dff0);border:1px solid #b0c4d8"></div>
<div class="t" style="left:1727px;top:970px;height:22px;font:bold 18.500px/22px 'Noto Sans CJK SC',sans-serif;color:#a8784c;letter-spacing:1px;line-height:22px">有系统消息</div>
<div class="t" style="left:1793px;top:1003px;height:22px;font:bold 17.500px/22px 'Noto Sans CJK SC',sans-serif;color:#a8784c;letter-spacing:.6px;line-height:22px">请注意查收！</div>
<div style="left:1845px;top:1031px;width:75px;height:25px;background:#ece9d8;border-top:1px solid #fff;border-left:1px solid #aaa"></div>
<svg class="a" style="left:1845px;top:1031px" width="75" height="25"><rect x="7" y="9" width="15" height="11" rx="2" fill="#bbb" stroke="#777"/><path d="M10 7q3-3 6 0" fill="none" stroke="#777"/><path d="M28 0v25" stroke="#aaa"/><circle cx="42" cy="13" r="8" fill="#1848c0" stroke="#9ab"/><text x="39" y="18" fill="#fff" font-size="12" font-weight="bold" font-family="Liberation Sans">?</text><path d="M55 0v25" stroke="#aaa"/><path d="M63 8h5M62 17h6l-3 3z" stroke="#000" fill="#000"/></svg>
</body></html>
